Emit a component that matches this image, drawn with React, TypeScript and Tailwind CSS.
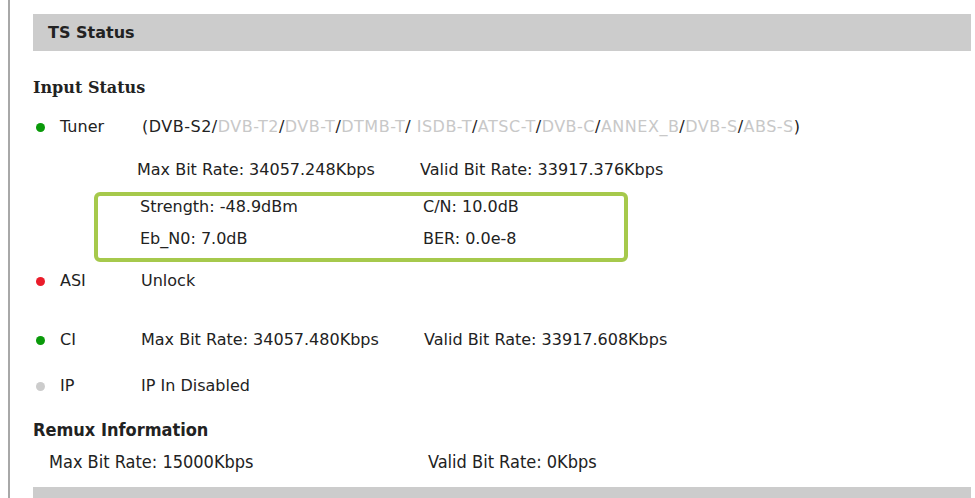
import React from 'react';

type Dot = 'green' | 'red' | 'gray';

const dotColor: Record<Dot, string> = {
  green: 'bg-[#0a9a0a]',
  red: 'bg-[#ea1c2a]',
  gray: 'bg-[#cccccc]',
};

const modes: { name: string; on: boolean }[] = [
  { name: 'DVB-S2', on: true },
  { name: 'DVB-T2', on: false },
  { name: 'DVB-T', on: false },
  { name: 'DTMB-T', on: false },
  { name: ' ISDB-T', on: false },
  { name: 'ATSC-T', on: false },
  { name: 'DVB-C', on: false },
  { name: 'ANNEX_B', on: false },
  { name: 'DVB-S', on: false },
  { name: 'ABS-S', on: false },
];

function StatusRow({ dot, label, children, className = '' }: { dot: Dot; label: string; children?: React.ReactNode; className?: string }) {
  return (
    <div className={`flex items-center h-[24px] ${className}`}>
      <span className={`w-[9px] h-[9px] rounded-full ml-[3px] ${dotColor[dot]}`} />
      <span className="w-[96px] pl-[15px]">{label}</span>
      {children}
    </div>
  );
}

export default function App() {
  return (
    <div className="min-h-screen bg-white pl-[8px] overflow-hidden">
      <div
        className="min-h-[498px] border-l-2 border-[#a8a8a8] pl-[23px] pr-[4px] pt-[14px] text-[16px] text-[#222]"
        style={{ fontFamily: '"DejaVu Sans", Verdana, sans-serif' }}
      >
        {/* Title bar */}
        <div className="h-[37px] bg-[#cccccc] flex items-center pl-[15px] font-bold text-[16px] text-[#222]">
          TS Status
        </div>

        <div
          className="mt-[25px] h-[24px] flex items-center font-bold text-[16px]"
          style={{ fontFamily: '"DejaVu Serif", Georgia, serif' }}
        >
          Input Status
        </div>

        {/* Tuner */}
        <StatusRow dot="green" label="Tuner" className="mt-[15px]">
          <span className="pl-[1px] whitespace-pre tracking-[0.5px]">
            (
            {modes.map((m, i) => (
              <React.Fragment key={m.name}>
                <span className={m.on ? '' : 'text-[#c8c8c8]'}>{m.name}</span>
                {i < modes.length - 1 && '/'}
              </React.Fragment>
            ))}
            )
          </span>
        </StatusRow>

        <div className="mt-[19px] h-[24px] flex items-center pl-[104px]">
          <span className="w-[283px]">Max Bit Rate: 34057.248Kbps</span>
          <span>Valid Bit Rate: 33917.376Kbps</span>
        </div>

        {/* Signal box */}
        <div className="mt-[10px] ml-[61px] w-[534px] h-[70px] border-4 border-[#a6c94c] rounded-[6px] pl-[42px]">
          <div className="h-[22px] flex items-center">
            <span className="w-[283px]">Strength: -48.9dBm</span>
            <span>C/N: 10.0dB</span>
          </div>
          <div className="mt-[10px] h-[22px] flex items-center">
            <span className="w-[283px]">Eb_N0: 7.0dB</span>
            <span>BER: 0.0e-8</span>
          </div>
        </div>

        <StatusRow dot="red" label="ASI" className="mt-[7px]">
          <span>Unlock</span>
        </StatusRow>

        <StatusRow dot="green" label="CI" className="mt-[35px]">
          <span className="w-[283px]">Max Bit Rate: 34057.480Kbps</span>
          <span>Valid Bit Rate: 33917.608Kbps</span>
        </StatusRow>

        <StatusRow dot="gray" label="IP" className="mt-[22px]">
          <span>IP In Disabled</span>
        </StatusRow>

        {/* Remux */}
        <div
          className="mt-[19px] h-[24px] flex items-center font-bold text-[18px]"
          style={{ fontFamily: '"DejaVu Sans Condensed", "DejaVu Sans", sans-serif' }}
        >
          Remux Information
        </div>
        <div
          className="mt-[8px] h-[24px] flex items-center pl-[16px] text-[18px]"
          style={{ fontFamily: '"DejaVu Sans Condensed", "DejaVu Sans", sans-serif' }}
        >
          <span className="w-[379px]">Max Bit Rate: 15000Kbps</span>
          <span>Valid Bit Rate: 0Kbps</span>
        </div>

        <div className="mt-[14px] h-[20px] bg-[#cccccc]" />
      </div>
    </div>
  );
}
